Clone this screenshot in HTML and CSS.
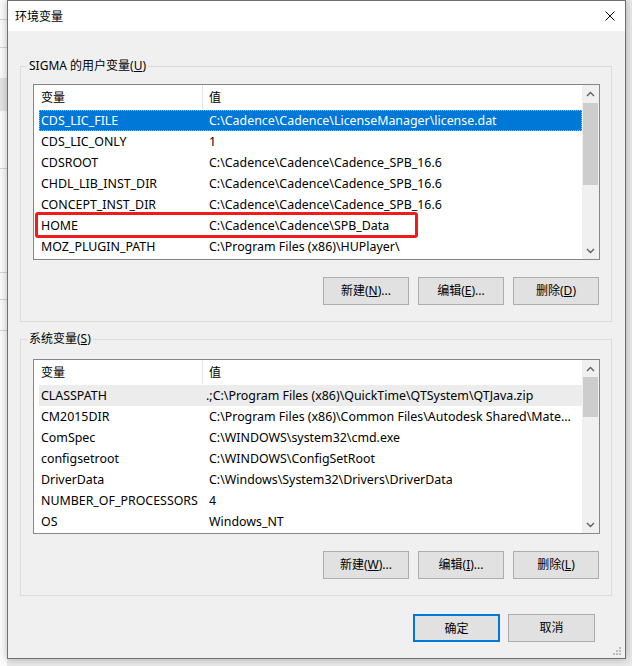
FILE: index.html
```html
<!DOCTYPE html>
<html lang="zh-CN">
<head>
<meta charset="utf-8">
<title>环境变量</title>
<link rel="stylesheet" href="styles.css">
</head>
<body>
<div class="window">
  <div class="titlebar">
    <span class="title">环境变量</span>
    <svg class="close" width="10" height="10" viewBox="0 0 10 10"><path d="M0.5 0.5 L9.5 9.5 M9.5 0.5 L0.5 9.5" stroke="#000" stroke-width="1" fill="none"/></svg>
  </div>
  <div class="content">
    <div class="group user">
      <span class="legend">SIGMA 的用户变量(<u>U</u>)</span>
      <div class="list user-list">
        <div class="list-main">
          <div class="head"><span class="c1">变量</span><span class="c2">值</span></div>
          <div class="row sel"><span class="c1">CDS_LIC_FILE</span><span class="c2">C:\Cadence\Cadence\LicenseManager\license.dat</span></div>
          <div class="row"><span class="c1">CDS_LIC_ONLY</span><span class="c2">1</span></div>
          <div class="row"><span class="c1">CDSROOT</span><span class="c2">C:\Cadence\Cadence\Cadence_SPB_16.6</span></div>
          <div class="row"><span class="c1">CHDL_LIB_INST_DIR</span><span class="c2">C:\Cadence\Cadence\Cadence_SPB_16.6</span></div>
          <div class="row"><span class="c1">CONCEPT_INST_DIR</span><span class="c2">C:\Cadence\Cadence\Cadence_SPB_16.6</span></div>
          <div class="row"><span class="c1">HOME</span><span class="c2">C:\Cadence\Cadence\SPB_Data</span></div>
          <div class="row"><span class="c1">MOZ_PLUGIN_PATH</span><span class="c2">C:\Program Files (x86)\HUPlayer\</span></div>
        </div>
        <div class="sb">
          <div class="arrow"><svg width="9" height="6" viewBox="0 0 9 6"><path d="M1 5 L4.5 1.5 L8 5" stroke="#606060" stroke-width="1.4" fill="none"/></svg></div>
          <div class="track"><div class="thumb thumb-user"></div></div>
          <div class="arrow"><svg width="9" height="6" viewBox="0 0 9 6"><path d="M1 1 L4.5 4.5 L8 1" stroke="#606060" stroke-width="1.4" fill="none"/></svg></div>
        </div>
        <div class="mark"></div>
      </div>
      <div class="btns">
        <button class="btn">新建(<u>N</u>)...</button>
        <button class="btn">编辑(<u>E</u>)...</button>
        <button class="btn">删除(<u>D</u>)</button>
      </div>
    </div>
    <div class="group sys">
      <span class="legend">系统变量(<u>S</u>)</span>
      <div class="list sys-list">
        <div class="list-main">
          <div class="head"><span class="c1">变量</span><span class="c2">值</span></div>
          <div class="row hover"><span class="c1">CLASSPATH</span><span class="c2 dot">.;C:\Program Files (x86)\QuickTime\QTSystem\QTJava.zip</span></div>
          <div class="row"><span class="c1">CM2015DIR</span><span class="c2">C:\Program Files (x86)\Common Files\Autodesk Shared\Mate...</span></div>
          <div class="row"><span class="c1">ComSpec</span><span class="c2">C:\WINDOWS\system32\cmd.exe</span></div>
          <div class="row"><span class="c1">configsetroot</span><span class="c2">C:\WINDOWS\ConfigSetRoot</span></div>
          <div class="row"><span class="c1">DriverData</span><span class="c2">C:\Windows\System32\Drivers\DriverData</span></div>
          <div class="row"><span class="c1">NUMBER_OF_PROCESSORS</span><span class="c2">4</span></div>
          <div class="row"><span class="c1">OS</span><span class="c2">Windows_NT</span></div>
        </div>
        <div class="sb">
          <div class="arrow"><svg width="9" height="6" viewBox="0 0 9 6"><path d="M1 5 L4.5 1.5 L8 5" stroke="#606060" stroke-width="1.4" fill="none"/></svg></div>
          <div class="track"><div class="thumb thumb-sys"></div></div>
          <div class="arrow"><svg width="9" height="6" viewBox="0 0 9 6"><path d="M1 1 L4.5 4.5 L8 1" stroke="#606060" stroke-width="1.4" fill="none"/></svg></div>
        </div>
      </div>
      <div class="btns">
        <button class="btn">新建(<u>W</u>)...</button>
        <button class="btn">编辑(<u>I</u>)...</button>
        <button class="btn">删除(<u>L</u>)</button>
      </div>
    </div>
    <div class="footer">
      <button class="btn wide default">确定</button>
      <button class="btn wide">取消</button>
    </div>
  </div>
  <svg class="grip" width="10" height="10" viewBox="0 0 10 10">
    <rect x="7" y="1" width="2" height="2" fill="#bcbcbc"/>
    <rect x="4" y="4" width="2" height="2" fill="#bcbcbc"/>
    <rect x="7" y="4" width="2" height="2" fill="#bcbcbc"/>
    <rect x="1" y="7" width="2" height="2" fill="#bcbcbc"/>
    <rect x="4" y="7" width="2" height="2" fill="#bcbcbc"/>
    <rect x="7" y="7" width="2" height="2" fill="#bcbcbc"/>
  </svg>
</div>
</body>
</html>
```
FILE: styles.css
```css
* { box-sizing: border-box; }

html, body {
  margin: 0;
  width: 632px;
  height: 666px;
  overflow: hidden;
}

body {
  font-family: "Noto Sans", "Noto Sans CJK SC", sans-serif;
  font-size: 12px;
  color: #000;
  background-color: #e9e9e9;
  background-image: linear-gradient(to bottom,
    #fbfbfb 0 19px, #d6d6d6 19px 20px,
    #fbfbfb 20px 47px, #d6d6d6 47px 48px,
    #fbfbfb 48px 78px, #e4e4e4 78px 111px,
    #fbfbfb 111px 168px, #d6d6d6 168px 169px,
    #fbfbfb 169px 272px, #d6d6d6 272px 273px,
    #fbfbfb 273px 299px, #d6d6d6 299px 300px,
    #fbfbfb 300px 330px, #d6d6d6 330px 331px,
    #fbfbfb 331px);
  background-size: 7px 100%;
  background-repeat: no-repeat;
}

.window {
  position: relative;
  margin-left: 7px;
  width: 619px;
  height: 659px;
  border: 1px solid #6f6f6f;
  background: #f0f0f0;
  box-shadow: 0 0 8px rgba(0, 0, 0, 0.28);
  display: flex;
  flex-direction: column;
}

.titlebar {
  height: 30px;
  background: #fff;
  display: flex;
  align-items: center;
  justify-content: space-between;
  padding: 0 10px 0 7px;
}

.title {
  font-family: "Noto Sans CJK SC", sans-serif;
  font-size: 12px;
  line-height: 16px;
}

.close { display: block; }

.content {
  padding: 0 13px 0 12px;
  display: flex;
  flex-direction: column;
}

.group {
  position: relative;
  border: 1px solid #dcdcdc;
  padding: 17px 11px 16px 12px;
}

.group.user { margin-top: 35px; }
.group.sys { margin-top: 17px; padding-top: 19px; }

.legend {
  position: absolute;
  left: 6px;
  top: -10px;
  padding: 0 2px;
  line-height: 18px;
  background: #f0f0f0;
  white-space: nowrap;
}

.list {
  position: relative;
  display: flex;
  border: 1px solid #828790;
  background: #fff;
}

.user-list { height: 176px; }
.sys-list { height: 175px; }

.list-main {
  flex: 1;
  min-width: 0;
  overflow: hidden;
}

.head {
  display: flex;
  height: 24px;
  margin-bottom: 1px;
  line-height: 25px;
}

.head .c1 {
  width: 169px;
  padding-left: 7px;
  border-right: 1px solid #e5e5e5;
}

.head .c2 { padding-left: 6px; }

.row {
  display: flex;
  height: 21px;
  margin-left: 5px;
  font-size: 12.4px;
  line-height: 21px;
  white-space: nowrap;
}

.row .c1 {
  width: 163px;
  flex: none;
  padding-left: 2px;
}

.row .c2 { padding-left: 7px; }
.row .c2.dot { padding-left: 4px; }

.row.sel {
  background: #0078d7;
  color: #fff;
  outline: 1px dotted #f2a65a;
  outline-offset: -1px;
}

.row.hover { background: #ececec; }

.sb {
  width: 17px;
  flex: none;
  background: #f0f0f0;
  display: flex;
  flex-direction: column;
}

.arrow {
  height: 17px;
  display: flex;
  align-items: center;
  justify-content: center;
}

.arrow svg { display: block; }

.track { flex: 1; }

.thumb {
  margin: 0 1px;
  background: #cdcdcd;
}

.thumb-user { margin-top: 1px; height: 82px; }
.thumb-sys { height: 40px; }

.mark {
  position: absolute;
  left: 1px;
  top: 127px;
  width: 383px;
  height: 26px;
  border: 3px solid #f01c1c;
  border-radius: 3px;
}

.btns {
  display: flex;
  justify-content: flex-end;
  gap: 9px;
  margin-top: 17px;
  padding-right: 1px;
}

.btn {
  width: 86px;
  height: 28px;
  padding: 0;
  border: 1px solid #adadad;
  background: #e1e1e1;
  font-family: "Noto Sans", "Noto Sans CJK SC", sans-serif;
  font-size: 12px;
  color: #000;
  line-height: 26px;
}

.btn.wide { width: 87px; }

.footer {
  display: flex;
  justify-content: flex-end;
  gap: 8px;
  margin-top: 18px;
  padding-right: 17px;
}

.btn.default { border: 2px solid #0078d7; }

.grip {
  position: absolute;
  right: 3px;
  bottom: 2px;
}
```
